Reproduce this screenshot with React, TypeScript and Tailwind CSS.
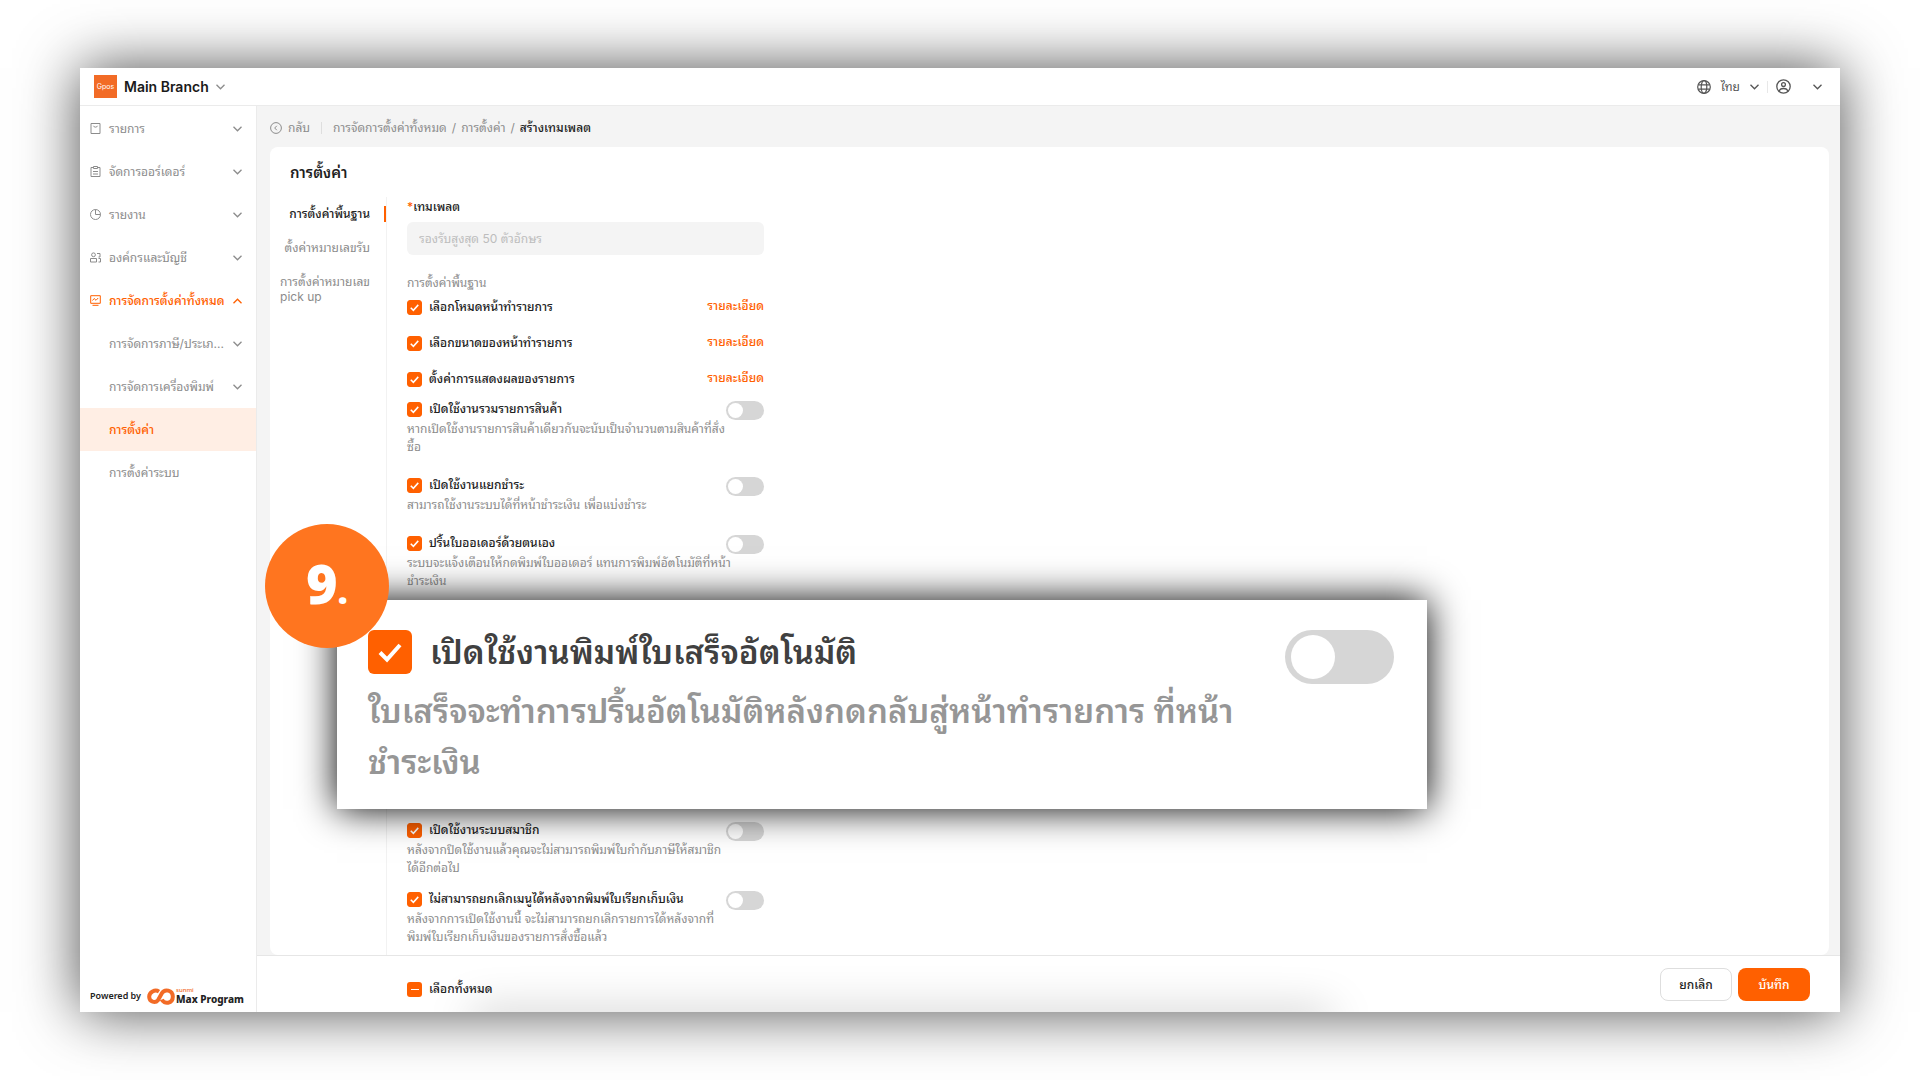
import { useEffect, useRef, useState } from 'react';

const menuItems = [
    { label: 'รายการ', icon: 'bag' },
    { label: 'จัดการออร์เดอร์', icon: 'clipboard' },
    { label: 'รายงาน', icon: 'pie' },
    { label: 'องค์กรและบัญชี', icon: 'people' },
];

const subItems = [
    { label: 'การจัดการภาษี/ประเภ...', expandable: true },
    { label: 'การจัดการเครื่องพิมพ์', expandable: true },
    { label: 'การตั้งค่า', active: true },
    { label: 'การตั้งค่าระบบ' },
];

const detailOptions = ['เลือกโหมดหน้าทำรายการ', 'เลือกขนาดของหน้าทำรายการ', 'ตั้งค่าการแสดงผลของรายการ'];

export default function App() {
    return (
        <div className="flex min-h-screen flex-col bg-white px-20 pt-[68px] pb-[68px] font-['Inter','Noto_Sans_Thai_Looped','Loma','Noto_Sans_Thai','Noto_Sans',sans-serif] text-[12px] leading-4 text-[#8c8c8c]">
            <div className="flex flex-1 flex-col bg-white shadow-[0_0_56px_rgba(0,0,0,0.7)]">
                <TopBar />
                <div className="flex flex-1">
                    <Sidebar />
                    <div className="flex flex-1 flex-col">
                        <main className="flex flex-1 flex-col bg-[#f4f4f4] pr-[11px] pl-[13px]">
                            <Breadcrumb />
                            <section className="flex-1 rounded-lg bg-white">
                                <h1 className="pt-3.5 pb-3 pl-5 text-[15px] leading-6 font-semibold text-[#1f1f1f]">การตั้งค่า</h1>
                                <div className="flex">
                                    <SettingsTabs />
                                    <SettingsForm />
                                </div>
                            </section>
                        </main>
                        <FooterBar />
                    </div>
                </div>
            </div>
        </div>
    );
}

function TopBar() {
    return (
        <header className="flex h-[38px] items-center justify-between border-b border-[#ebebeb] pr-[18px] pl-3.5">
            <button className="flex items-center gap-[7px]">
                <span className="flex size-[23px] items-center justify-center bg-[#f26b26] text-[7px] text-white">Gpos</span>
                <span className="text-[14px] font-semibold text-[#1a1a1a]">Main Branch</span>
                <Chevron />
            </button>
            <div className="flex items-center text-[#555]">
                <button className="flex items-center gap-2.5">
                    <svg className="size-3.5" viewBox="0 0 14 14" fill="none" stroke="currentColor" strokeWidth="1.2">
                        <circle cx="7" cy="7" r="6.3" />
                        <ellipse cx="7" cy="7" rx="2.8" ry="6.3" />
                        <path d="M1.3 4.8h11.4M1.3 9.2h11.4" />
                    </svg>
                    <span>ไทย</span>
                    <Chevron />
                </button>
                <span className="mx-2 h-3 w-px bg-[#e8e8e8]" />
                <button className="flex items-center gap-[22px]" aria-label="บัญชี">
                    <svg className="size-[15px]" viewBox="0 0 15 15" fill="none" stroke="currentColor" strokeWidth="1.3">
                        <circle cx="7.5" cy="7.5" r="6.7" />
                        <circle cx="7.5" cy="5.6" r="1.9" />
                        <path d="M3.2 12.400c.4-2 2-2.900 4.300-2.900s3.900.9 4.300 2.900" />
                    </svg>
                    <Chevron />
                </button>
            </div>
        </header>
    );
}

function Sidebar() {
    return (
        <aside className="flex w-[177px] flex-col justify-between border-r border-[#ebebeb] pt-px">
            <nav>
                {menuItems.map((item) => (
                    <button key={item.label} className="flex h-[43px] w-full items-center gap-2 pr-3.5 pl-2.5">
                        <MenuIcon name={item.icon} />
                        <span className="flex-1 text-left">{item.label}</span>
                        <Chevron />
                    </button>
                ))}
                <button className="flex h-[43px] w-full items-center gap-2 pr-3.5 pl-2.5 font-medium whitespace-nowrap text-[#ff6000]">
                    <MenuIcon name="monitor" />
                    <span className="flex-1 text-left">การจัดการตั้งค่าทั้งหมด</span>
                    <Chevron up />
                </button>
                {subItems.map((item) => (
                    <a
                        key={item.label}
                        href="#settings"
                        className={`flex h-[43px] items-center justify-between pr-3.5 pl-[29px] whitespace-nowrap ${item.active ? 'bg-[#ffeee4] font-medium text-[#ff6000]' : ''}`}
                    >
                        <span>{item.label}</span>
                        {item.expandable && <Chevron />}
                    </a>
                ))}
            </nav>
            <div className="flex items-center gap-1.5 px-2.5 pb-[7px] font-['Noto_Sans',sans-serif] text-[#222]">
                <span className="text-[9px] font-semibold whitespace-nowrap">Powered by</span>
                <div className="flex items-center gap-px">
                    <svg className="h-[17px] w-7" viewBox="0 0 28 17" fill="none" stroke="#f26b26" strokeWidth="4">
                        <path d="M12 3.600C8 1 2 4 2.200 9c.2 5 6 6.500 8.800 3.200L15 5c2.500-4.200 10.500-3.300 10.800 3.500.2 7.500-9 8-11 3" />
                    </svg>
                    <div className="flex flex-col whitespace-nowrap">
                        <span className="text-[6px] leading-[6px] font-medium text-[#f26b26]">sunmi</span>
                        <span className="text-[10px] leading-3 font-extrabold">Max Program</span>
                    </div>
                </div>
            </div>
        </aside>
    );
}

function Breadcrumb() {
    return (
        <nav className="flex h-[41px] items-center pt-[3px]">
            <a href="#back" className="flex items-center gap-1.5">
                <svg className="size-3" viewBox="0 0 12 12" fill="none" stroke="currentColor">
                    <circle cx="6" cy="6" r="5.400" />
                    <path d="M6.800 3.800L4.700 6l2.100 2.200" />
                </svg>
                กลับ
            </a>
            <span className="mx-[11px] h-3 w-px bg-[#dedede]" />
            <div className="flex gap-[5px]">
                <a href="#all">การจัดการตั้งค่าทั้งหมด</a>
                <span>/</span>
                <a href="#settings">การตั้งค่า</a>
                <span>/</span>
                <span className="font-medium text-[#222]">สร้างเทมเพลต</span>
            </div>
        </nav>
    );
}

function SettingsTabs() {
    return (
        <nav className="flex w-[117px] flex-col items-end gap-[18px] border-r border-[#f2f2f2] pt-[9px] pr-4 pl-[11px]">
            <button className="relative w-full text-right font-medium whitespace-nowrap text-[#222] after:absolute after:top-0 after:-right-4 after:h-4 after:w-0.5 after:bg-[#ff6000]">
                การตั้งค่าพื้นฐาน
            </button>
            <button className="whitespace-nowrap">ตั้งค่าหมายเลขรับ</button>
            <button className="text-left leading-[15px] whitespace-pre">{'การตั้งค่าหมายเลข\npick up'}</button>
        </nav>
    );
}

function SettingsForm() {
    return (
        <form className="ml-5 flex w-[357px] flex-col pt-0.5 pb-[9px]">
            <label htmlFor="template" className="font-medium text-[#222]">
                <span className="text-[#ff6000]">*</span>เทมเพลต
            </label>
            <input
                id="template"
                type="text"
                placeholder="รองรับสูงสุด 50 ตัวอักษร"
                className="mt-[7px] h-[33px] rounded-md bg-[#f4f4f4] px-3 outline-none placeholder:text-[#bdbdbd]"
            />
            <h2 className="mt-5">การตั้งค่าพื้นฐาน</h2>
            <div className="mt-2 flex flex-col gap-5">
                {detailOptions.map((label) => (
                    <div key={label} className="flex h-4 items-start justify-between">
                        <CheckLabel label={label} />
                        <a href="#detail" className="leading-[14px] font-medium text-[#ff6000]">รายละเอียด</a>
                    </div>
                ))}
            </div>
            <div className="mt-3.5 flex flex-col gap-[21px]">
                <ToggleOption
                    label="เปิดใช้งานรวมรายการสินค้า"
                    description={'หากเปิดใช้งานรายการสินค้าเดียวกันจะนับเป็นจำนวนตามสินค้าที่สั่ง\nซื้อ'}
                />
                <ToggleOption
                    label="เปิดใช้งานแยกชำระ"
                    description="สามารถใช้งานระบบได้ที่หน้าชำระเงิน เพื่อแบ่งชำระ"
                />
                <ToggleOption
                    label="ปริ้นใบออเดอร์ด้วยตนเอง"
                    description={'ระบบจะแจ้งเตือนให้กดพิมพ์ใบออเดอร์ แทนการพิมพ์อัตโนมัติที่หน้า\nชำระเงิน'}
                />
            </div>
            <div className="relative h-[232px]">
                <Callout />
            </div>
            <div className="flex flex-col gap-3.5">
                <ToggleOption
                    label="เปิดใช้งานระบบสมาชิก"
                    description={'หลังจากปิดใช้งานแล้วคุณจะไม่สามารถพิมพ์ใบกำกับภาษีให้สมาชิก\nได้อีกต่อไป'}
                />
                <ToggleOption
                    label="ไม่สามารถยกเลิกเมนูได้หลังจากพิมพ์ใบเรียกเก็บเงิน"
                    description={'หลังจากการเปิดใช้งานนี้ จะไม่สามารถยกเลิกรายการได้หลังจากที่\nพิมพ์ใบเรียกเก็บเงินของรายการสั่งซื้อแล้ว'}
                />
            </div>
        </form>
    );
}

// enlarged copy of one option, floating above the form
function Callout() {
    return (
        <div className="absolute top-2.5 -left-[70px] z-10 flex h-[209px] w-[1090px] items-start justify-between bg-white pt-[30px] pr-[33px] pl-[31px] shadow-[0_0_36px_#000]">
            <div>
                <label className="flex items-center gap-[18px] text-[33px] leading-[44px] font-semibold whitespace-nowrap text-[#404040]">
                    <span className="grid size-11 place-items-center">
                        <input type="checkbox" defaultChecked className="size-11 appearance-none rounded-md bg-[#ff6000] [grid-area:1/1]" />
                        <CheckMark className="size-6" />
                    </span>
                    เปิดใช้งานพิมพ์ใบเสร็จอัตโนมัติ
                </label>
                <p className="mt-3 text-[33px] leading-[51px] font-semibold whitespace-pre text-[#969696]">
                    {'ใบเสร็จจะทำการปริ้นอัตโนมัติหลังกดกลับสู่หน้าทำรายการ ที่หน้า\nชำระเงิน'}
                </p>
            </div>
            <input
                type="checkbox"
                role="switch"
                aria-label="เปิดใช้งานพิมพ์ใบเสร็จอัตโนมัติ"
                className="flex h-[54px] w-[109px] appearance-none items-center rounded-full bg-[#d6d6d6] px-1.5 before:size-11 before:rounded-full before:bg-white"
            />
            <div className="absolute -top-[76px] -left-[72px] flex size-[124px] items-center justify-center rounded-full bg-[#ff751f] pb-1.5 font-['Open_Sans',sans-serif] font-extrabold text-white">
                <p className="text-[54px] leading-none">9<span className="text-[36px]">.</span></p>
            </div>
        </div>
    );
}

function FooterBar() {
    const ref = useRef<HTMLInputElement>(null);

    useEffect(() => {
        if (ref.current) ref.current.indeterminate = true;
    }, []);

    return (
        <footer className="relative flex items-start justify-between overflow-hidden border-t border-[#e6e6e6] bg-white pt-3 pr-[30px] pb-[11px] pl-[150px]">
            <div className="absolute top-full right-[510px] left-[215px] h-5 shadow-[0_0_44px_rgba(0,0,0,0.25)]" />
            <label className="mt-[13px] flex items-center gap-[7px] font-medium text-[#222]">
                <span className="grid size-[15px] place-items-center">
                    <input ref={ref} type="checkbox" className="size-[15px] appearance-none rounded-[3px] bg-[#ff6000] [grid-area:1/1]" />
                    <span className="z-1 h-px w-2 bg-white [grid-area:1/1]" />
                </span>
                เลือกทั้งหมด
            </label>
            <div className="flex gap-1.5 font-medium">
                <button className="h-[33px] w-[72px] rounded-lg border border-[#dedede] bg-white text-[#222]">ยกเลิก</button>
                <button className="h-[33px] w-[72px] rounded-lg bg-[#ff6000] text-white">บันทึก</button>
            </div>
        </footer>
    );
}

function CheckLabel({ label }: { label: string }) {
    const [checked, setChecked] = useState(true);

    return (
        <label className="flex items-center gap-[7px] font-medium whitespace-nowrap text-[#222]">
            <span className="grid size-[15px] place-items-center">
                <input
                    type="checkbox"
                    checked={checked}
                    onChange={() => setChecked(!checked)}
                    className="size-[15px] appearance-none rounded-[3px] border border-[#ff6000] checked:bg-[#ff6000] [grid-area:1/1]"
                />
                <CheckMark className="size-[9px]" />
            </span>
            {label}
        </label>
    );
}

function ToggleOption({ label, description }: { label: string; description: string }) {
    return (
        <div className="flex items-start justify-between">
            <div className="w-0 flex-1">
                <CheckLabel label={label} />
                <p className="mt-[3px] leading-[18px] whitespace-pre">{description}</p>
            </div>
            <input
                type="checkbox"
                role="switch"
                aria-label={label}
                className="flex h-[19px] w-[38px] appearance-none items-center rounded-full bg-[#d6d6d6] px-0.5 before:size-[15px] before:rounded-full before:bg-white"
            />
        </div>
    );
}

function CheckMark({ className }: { className: string }) {
    return (
        <svg className={`pointer-events-none z-1 [grid-area:1/1] ${className}`} viewBox="0 0 24 24" fill="none" stroke="#fff" strokeWidth="4">
            <path d="M2 12.500l7 7L22 5" />
        </svg>
    );
}

function Chevron({ up }: { up?: boolean }) {
    return (
        <svg className={`h-[6px] w-[9px] shrink-0 ${up ? 'rotate-180' : ''}`} viewBox="0 0 9 6" fill="none" stroke="currentColor" strokeWidth="1.3">
            <path d="M.5 .8l4 4 4-4" />
        </svg>
    );
}

function MenuIcon({ name }: { name: string }) {
    return (
        <svg className="size-[11px] shrink-0" viewBox="0 0 11 11" fill="none" stroke="currentColor">
            {name === 'bag' && <path d="M1 .5h9v10H1zM3.500 2.800c.3 1.800 3.700 1.800 4 0" />}
            {name === 'clipboard' && <path d="M3.500 1.500H1v9h9v-9H7.500M3.500 .5h4v2h-4zM3 5.500h5M3 8h5" />}
            {name === 'pie' && (
                <>
                    <circle cx="5.500" cy="5.500" r="5" />
                    <path d="M5.500 .5v5h5" />
                </>
            )}
            {name === 'people' && (
                <>
                    <circle cx="3.500" cy="2.800" r="1.900" />
                    <path d="M.5 10V6.500h6V10zM7 1.500h3v3.500H8.500M8.500 6.500h2V10H8.500" />
                </>
            )}
            {name === 'monitor' && <path d="M.7 .7h9.600v7.600H.7zM2.500 10.300h6M2.500 5.500l1.700-2 1.800 1.800 2.200-2.300" />}
        </svg>
    );
}
